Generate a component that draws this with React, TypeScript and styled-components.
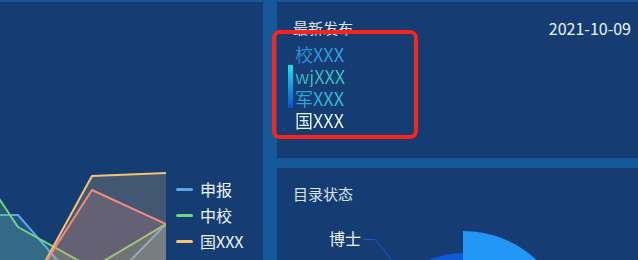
import React from "react";
import styled, { createGlobalStyle } from "styled-components";

const Global = createGlobalStyle`
  html, body { margin: 0; padding: 0; background: #15589a; }
  body { font-family: "Noto Sans CJK SC", "Noto Sans", sans-serif; }
`;

const Screen = styled.div`
  position: relative;
  width: 638px;
  height: 260px;
  overflow: hidden;
  box-sizing: border-box;
  padding-top: 2px;
  display: grid;
  grid-template-columns: 263px 361px;
  column-gap: 14px;
  background: #15589a;
`;

const Panel = styled.section`
  position: relative;
  overflow: hidden;
  background: #163d73;
`;

const ChartPanel = styled(Panel)`
  display: flex;
  align-items: flex-end;
`;

const ChartSvg = styled.svg`
  display: block;
  flex: none;
`;

const Legend = styled.ul`
  list-style: none;
  margin: 0 0 0 10px;
  padding: 0 0 6px;
  display: flex;
  flex-direction: column;
`;

const LegendItem = styled.li`
  height: 26px;
  display: flex;
  align-items: center;
  gap: 7px;
  font-size: 16px;
  color: #f0f4fa;
  white-space: nowrap;
`;

const LegendLine = styled.span<{ $color: string }>`
  width: 17px;
  height: 3px;
  border-radius: 2px;
  background: ${(p) => p.$color};
`;

const RightColumn = styled.div`
  display: grid;
  grid-template-rows: 156px 1fr;
  row-gap: 10px;
`;

const NewsPanel = styled(Panel)`
  padding: 16px 7px 0 16px;
`;

const Header = styled.div`
  display: flex;
  justify-content: space-between;
  align-items: center;
  height: 20px;
`;

const Title = styled.h2`
  margin: 0;
  font-size: 15px;
  font-weight: 400;
  line-height: 20px;
  color: #dbe4ee;
`;

const DateText = styled.span`
  font-size: 16px;
  line-height: 20px;
  color: #eaf5ff;
`;

const ListRow = styled.div`
  display: flex;
  margin: 5px 0 0 -5px;
`;

const ActiveBar = styled.div`
  width: 5px;
  height: 43px;
  margin-top: 22px;
  background: linear-gradient(180deg, #20e2ef 0%, #0a52cf 100%);
`;

const Items = styled.ul`
  list-style: none;
  margin: 0 0 0 2px;
  padding: 0;
`;

const Item = styled.li<{ $from: string; $to: string }>`
  font-size: 18px;
  line-height: 22px;
  width: max-content;
  background: linear-gradient(90deg, ${(p) => p.$from}, ${(p) => p.$to});
  -webkit-background-clip: text;
  background-clip: text;
  color: transparent;
`;

const StatusPanel = styled(Panel)`
  display: flex;
  flex-direction: column;
`;

const StatusTitle = styled(Title)`
  padding: 16px 16px 0;
`;

const PieSvg = styled.svg`
  display: block;
`;

const Annotation = styled.div`
  position: absolute;
  left: 272px;
  top: 30px;
  width: 146px;
  height: 109px;
  box-sizing: border-box;
  border: 4px solid #fa2418;
  border-radius: 8px;
  pointer-events: none;
`;

type Series = { color: string; pts: [number, number][] };

const series: Series[] = [
  { color: "#5aa7e8", pts: [[-130, 215], [-56, 215], [18, 215], [92, 300], [166, 224]] },
  { color: "#72d47f", pts: [[-130, 60], [-56, 116], [18, 227], [92, 268], [166, 224]] },
  { color: "#f4c470", pts: [[-130, 340], [-56, 335], [18, 311], [92, 176], [166, 173]] },
  { color: "#f08c7c", pts: [[-130, 340], [-56, 335], [18, 305], [92, 190], [166, 224]] },
];

const line = (pts: [number, number][]) => pts.map((p) => p.join(",")).join(" ");
const area = (pts: [number, number][]) =>
  `M${pts[0][0]},400 ` + pts.map((p) => `L${p[0]},${p[1]}`).join(" ") + ` L${pts[pts.length - 1][0]},400 Z`;

const legend = [
  { name: "申报", color: "#5aa7e8" },
  { name: "中校", color: "#72d47f" },
  { name: "国XXX", color: "#f4c470" },
];

const news = [
  { text: "校XXX", from: "#2a8bd6", to: "#35a6ea" },
  { text: "wjXXX", from: "#33b4c9", to: "#3ecbc0" },
  { text: "军XXX", from: "#2a9ee0", to: "#33c8d6" },
  { text: "国XXX", from: "#e2f6ff", to: "#f2fbff" },
];

export default function App() {
  return (
    <>
      <Global />
      <Screen>
        <ChartPanel>
          <ChartSvg width={166} height={92} viewBox="0 168 166 92">
            {series.map((s) => (
              <g key={s.color}>
                <path d={area(s.pts)} fill={s.color} fillOpacity={0.2} />
                <polyline points={line(s.pts)} fill="none" stroke={s.color} strokeWidth={2} strokeLinejoin="round" />
              </g>
            ))}
          </ChartSvg>
          <Legend>
            {legend.map((l) => (
              <LegendItem key={l.name}>
                <LegendLine $color={l.color} />
                {l.name}
              </LegendItem>
            ))}
          </Legend>
        </ChartPanel>
        <RightColumn>
          <NewsPanel>
            <Header>
              <Title>最新发布</Title>
              <DateText>2021-10-09</DateText>
            </Header>
            <ListRow>
              <ActiveBar />
              <Items>
                {news.map((n) => (
                  <Item key={n.text} $from={n.from} $to={n.to}>
                    {n.text}
                  </Item>
                ))}
              </Items>
            </ListRow>
          </NewsPanel>
          <StatusPanel>
            <StatusTitle>目录状态</StatusTitle>
            <PieSvg width={361} height={56} viewBox="277 204 361 56">
              <path d="M463,339 L377,339 A86,86 0 0,1 463,253 Z" fill="#0b5cd6" />
              <path d="M463,339 L463,231 A108,108 0 0,1 571,339 Z" fill="#2196f5" />
              <polyline points="364,239.5 375,239.5 400,270" fill="none" stroke="#0b5cd6" strokeWidth={1} />
              <text x={329} y={245} fontSize={16} fill="#f2f6fb" fontFamily='"Noto Sans CJK SC", sans-serif'>
                博士
              </text>
            </PieSvg>
          </StatusPanel>
        </RightColumn>
        <Annotation />
      </Screen>
    </>
  );
}
